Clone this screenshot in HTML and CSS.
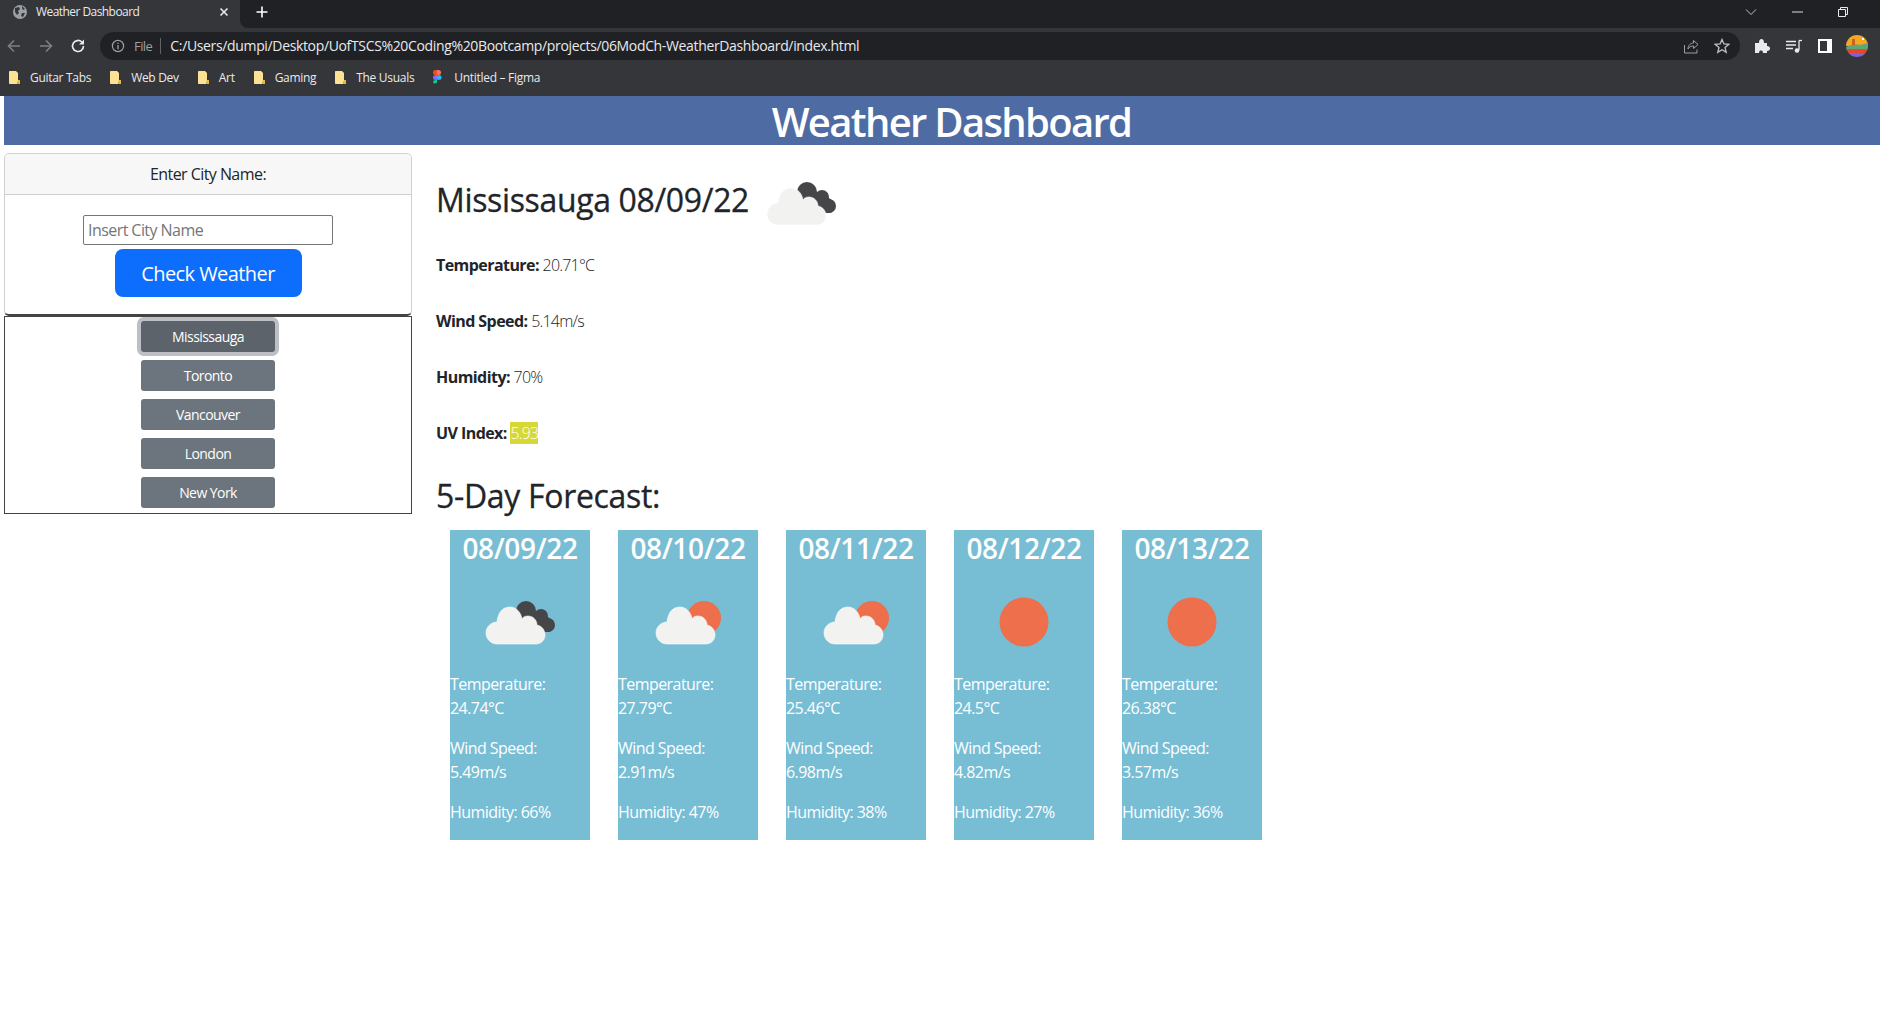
FILE: index.html
```html
<!DOCTYPE html>
<html lang="en">
<head>
    <meta charset="UTF-8">
    <title>Weather Dashboard</title>
    <link rel="stylesheet" href="styles.css">
</head>
<body>
<svg class="defs" width="0" height="0">
    <defs>
        <path id="cloud-shape" d="M27 72 H66 C71 72 75 68 75 63 C75 58 72 54 67 53 C67 48 63 44 58 44 C55 44 53 45 52 47 C51 40 46 35 40 35 C33 35 28 40 27 50 C21 50 16 55 16 61 C16 67 21 72 27 72 Z"/>
        <g id="icon-dark">
            <circle cx="56" cy="39" r="10" fill="#464548"/>
            <circle cx="71" cy="44" r="7" fill="#464548"/>
            <circle cx="78" cy="53" r="7" fill="#464548"/>
            <path fill="#464548" d="M50 40 L72 40 L84 50 L80 60 L68 60 Z"/>
            <use href="#cloud-shape" fill="#f2f2f0" stroke="#fff" stroke-width="0.6"/>
        </g>
        <g id="icon-sun-cloud">
            <circle cx="66" cy="46" r="17" fill="#ee6f4c"/>
            <use href="#cloud-shape" x="2" fill="#f2f2f0" stroke="#fff" stroke-width="0.6"/>
        </g>
        <g id="icon-sun">
            <circle cx="50" cy="50" r="24.5" fill="#ee6f4c"/>
        </g>
        <g id="folder">
            <path fill="#fde293" d="M1 2 C1 1.4 1.4 1 2 1 H8 L10 3 V11 L9 14 H2 C1.4 14 1 13.6 1 13 Z"/>
            <path fill="#e8b93c" d="M10 10 L12 10 V14 H9 Z"/>
        </g>
    </defs>
</svg>

<div class="tabstrip">
    <div class="tab">
        <svg class="favicon" width="16" height="16" viewBox="0 0 16 16"><circle cx="8" cy="8" r="7" fill="#9aa0a6"/><path fill="#35363a" d="M3 4 L7 3 L8 5 L6 7 L7 9 L5 11 L3 8 Z M10 2 L13 5 L11 6 L10 4 Z M10 9 L13 9 L11 13 L9 12 Z"/></svg>
        <span class="tab-title">Weather Dashboard</span>
        <svg class="tab-close" width="10" height="10" viewBox="0 0 10 10"><path d="M1.5 1.5 L8.5 8.5 M8.5 1.5 L1.5 8.5" stroke="#e8eaed" stroke-width="1.6"/></svg>
    </div>
    <div class="strip-rest">
        <svg class="new-tab" width="12" height="12" viewBox="0 0 12 12"><path d="M6 0.5 V11.5 M0.5 6 H11.5" stroke="#fff" stroke-width="1.6"/></svg>
        <div class="win-btns">
            <svg width="12" height="8" viewBox="0 0 12 8"><path d="M1 1.5 L6 6.5 L11 1.5" fill="none" stroke="#bdc1c6" stroke-width="1"/></svg>
            <svg width="11" height="2" viewBox="0 0 11 2"><path d="M0 1 H11" stroke="#dadce0" stroke-width="1"/></svg>
            <svg width="10" height="10" viewBox="0 0 10 10"><path d="M0.5 2.5 H7.5 V9.5 H0.5 Z M2.5 2.5 V0.5 H9.5 V7.5 H7.5" fill="none" stroke="#e8eaed" stroke-width="1"/></svg>
        </div>
    </div>
</div>

<div class="toolbar">
    <svg class="nav" width="16" height="16" viewBox="0 0 16 16"><path d="M14 8 H2.5 M8 2.5 L2.5 8 L8 13.5" fill="none" stroke="#7d8084" stroke-width="1.6"/></svg>
    <svg class="nav" width="16" height="16" viewBox="0 0 16 16"><path d="M2 8 H13.5 M8 2.5 L13.5 8 L8 13.5" fill="none" stroke="#7d8084" stroke-width="1.6"/></svg>
    <svg class="nav" width="16" height="16" viewBox="0 0 16 16"><path d="M13.5 8 A5.5 5.5 0 1 1 11.8 4" fill="none" stroke="#e8eaed" stroke-width="1.7"/><path fill="#e8eaed" d="M14 1.5 V6.5 H9 Z"/></svg>
    <div class="omnibox">
        <svg width="14" height="14" viewBox="0 0 14 14"><circle cx="7" cy="7" r="5.6" fill="none" stroke="#9aa0a6" stroke-width="1.2"/><path d="M7 6 V10.2 M7 3.8 V5" stroke="#9aa0a6" stroke-width="1.3"/></svg>
        <span class="scheme">File</span>
        <span class="url">C:/Users/dumpi/Desktop/UofTSCS%20Coding%20Bootcamp/projects/06ModCh-WeatherDashboard/index.html</span>
        <svg class="omni-end" width="16" height="16" viewBox="0 0 16 16"><path d="M1.5 7 V15 H14 V11.5 M5 11 C5 7 8 5 10.5 5 V2.5 L15 6.5 L10.5 10.5 V8 C8 8 6 9 5 11 Z" fill="none" stroke="#9aa0a6" stroke-width="1"/></svg>
        <svg width="16" height="16" viewBox="0 0 16 16"><path d="M8 1.5 L9.9 6 L14.7 6.4 L11 9.5 L12.2 14.3 L8 11.7 L3.8 14.3 L5 9.5 L1.3 6.4 L6.1 6 Z" fill="none" stroke="#bdc1c6" stroke-width="1.3"/></svg>
    </div>
    <div class="tool-icons">
        <svg width="16" height="16" viewBox="0 0 16 16"><path fill="#e8eaed" d="M1 5 H5 C5 2 6 1 7.5 1 C9 1 10 2 10 5 H13 V8 C15 8 16 9 16 10.5 C16 12 15 13 13 13 V15 H9 C9 13 8 12.5 7 12.5 C6 12.5 5 13 5 15 H1 Z"/></svg>
        <svg width="16" height="16" viewBox="0 0 16 16"><path d="M0 3.5 H10 M0 7 H10 M0 10.5 H7" stroke="#e8eaed" stroke-width="1.3"/><path d="M13 2.5 V12" stroke="#e8eaed" stroke-width="1.3"/><circle cx="11" cy="12.5" r="2.3" fill="#e8eaed"/><path d="M13 2.5 H16" stroke="#e8eaed" stroke-width="1.3"/></svg>
        <svg width="14" height="14" viewBox="0 0 14 14"><path fill="#fff" fill-rule="evenodd" d="M0 0 H14 V14 H0 Z M2 2 V12 H9 V2 Z"/></svg>
        <svg class="avatar" width="22" height="22" viewBox="0 0 22 22">
            <clipPath id="avatar-clip"><circle cx="11" cy="11" r="11"/></clipPath>
            <g clip-path="url(#avatar-clip)">
                <rect width="22" height="11" fill="#f5a623"/>
                <path d="M0 12 L8 9 L14 10 L22 8 V15 H0 Z" fill="#5fa777"/>
                <rect y="14" width="22" height="4" fill="#e8452c"/>
                <rect y="18" width="22" height="4" fill="#7b63d6"/>
                <rect x="6" y="4" width="3" height="6" fill="#c9651f"/>
                <rect x="16" y="3" width="2" height="2" fill="#fff"/>
            </g>
        </svg>
    </div>
</div>

<div class="bookmarks">
    <span class="bookmark"><svg width="12" height="15" viewBox="0 0 12 15"><use href="#folder"/></svg>Guitar Tabs</span>
    <span class="bookmark"><svg width="12" height="15" viewBox="0 0 12 15"><use href="#folder"/></svg>Web Dev</span>
    <span class="bookmark"><svg width="12" height="15" viewBox="0 0 12 15"><use href="#folder"/></svg>Art</span>
    <span class="bookmark"><svg width="12" height="15" viewBox="0 0 12 15"><use href="#folder"/></svg>Gaming</span>
    <span class="bookmark"><svg width="12" height="15" viewBox="0 0 12 15"><use href="#folder"/></svg>The Usuals</span>
    <span class="bookmark"><svg width="12" height="15" viewBox="0 0 12 15"><path fill="#f24e1e" d="M1 2.5 A2.5 2.5 0 0 1 3.5 0 H5 V5 H3.5 A2.5 2.5 0 0 1 1 2.5 Z"/><path fill="#ff7262" d="M5 0 H6.5 A2.5 2.5 0 0 1 6.5 5 H5 Z"/><path fill="#a259ff" d="M1 7.5 A2.5 2.5 0 0 1 3.5 5 H5 V10 H3.5 A2.5 2.5 0 0 1 1 7.5 Z"/><circle cx="7" cy="7.5" r="2.5" fill="#1abcfe"/><path fill="#0acf83" d="M1 12.5 A2.5 2.5 0 0 1 3.5 10 H5 V12.5 A2.5 2.5 0 0 1 1 12.5 Z"/></svg>Untitled – Figma</span>
</div>

<div class="page">
    <header class="page-title">Weather Dashboard</header>
    <div class="layout">
        <aside class="side">
            <div class="card">
                <div class="card-header">Enter City Name:</div>
                <div class="card-body">
                    <input class="city-input" type="text" placeholder="Insert City Name">
                    <button class="btn-check">Check Weather</button>
                </div>
            </div>
            <div class="history">
                <button class="btn-city focus">Mississauga</button>
                <button class="btn-city">Toronto</button>
                <button class="btn-city">Vancouver</button>
                <button class="btn-city">London</button>
                <button class="btn-city">New York</button>
            </div>
        </aside>
        <main class="main">
            <h2 class="today-title">Mississauga 08/09/22 <svg class="icon" width="100" height="100" viewBox="0 0 100 100"><use href="#icon-dark"/></svg></h2>
            <p class="stat"><b>Temperature:</b> <span>20.71°C</span></p>
            <p class="stat"><b>Wind Speed:</b> <span>5.14m/s</span></p>
            <p class="stat"><b>Humidity:</b> <span>70%</span></p>
            <p class="stat"><b>UV Index:</b> <span class="uv">5.93</span></p>
            <h2 class="forecast-title">5-Day Forecast:</h2>
            <div class="forecast">
                <div class="day">
                    <h3>08/09/22</h3>
                    <svg class="icon" width="100" height="100" viewBox="0 0 100 100"><use href="#icon-dark"/></svg>
                    <p>Temperature: 24.74°C</p>
                    <p>Wind Speed: 5.49m/s</p>
                    <p>Humidity: 66%</p>
                </div>
                <div class="day">
                    <h3>08/10/22</h3>
                    <svg class="icon" width="100" height="100" viewBox="0 0 100 100"><use href="#icon-sun-cloud"/></svg>
                    <p>Temperature: 27.79°C</p>
                    <p>Wind Speed: 2.91m/s</p>
                    <p>Humidity: 47%</p>
                </div>
                <div class="day">
                    <h3>08/11/22</h3>
                    <svg class="icon" width="100" height="100" viewBox="0 0 100 100"><use href="#icon-sun-cloud"/></svg>
                    <p>Temperature: 25.46°C</p>
                    <p>Wind Speed: 6.98m/s</p>
                    <p>Humidity: 38%</p>
                </div>
                <div class="day">
                    <h3>08/12/22</h3>
                    <svg class="icon" width="100" height="100" viewBox="0 0 100 100"><use href="#icon-sun"/></svg>
                    <p>Temperature: 24.5°C</p>
                    <p>Wind Speed: 4.82m/s</p>
                    <p>Humidity: 27%</p>
                </div>
                <div class="day">
                    <h3>08/13/22</h3>
                    <svg class="icon" width="100" height="100" viewBox="0 0 100 100"><use href="#icon-sun"/></svg>
                    <p>Temperature: 26.38°C</p>
                    <p>Wind Speed: 3.57m/s</p>
                    <p>Humidity: 36%</p>
                </div>
            </div>
        </main>
    </div>
</div>
</body>
</html>
```

FILE: styles.css
```css
* {
    box-sizing: border-box;
}

html, body {
    margin: 0;
    padding: 0;
    overflow: hidden;
}

body {
    height: 1017px;
    background: #fff;
    color: #212529;
    font-family: "Open Sans", "Noto Sans", sans-serif;
    font-size: 16px;
    line-height: 24px;
    letter-spacing: -0.035em;
}

.defs {
    position: absolute;
}

/* browser chrome */
.tabstrip {
    height: 28px;
    background: #35363a;
    display: flex;
}

.tab {
    width: 240px;
    padding: 0 11px 5px 12px;
    display: flex;
    align-items: center;
}

.tab-title {
    margin-left: 8px;
    flex: 1;
    color: #e8eaed;
    font-size: 12px;
}

.strip-rest {
    flex: 1;
    padding: 0 32px 5px 16px;
    background: #202124;
    border-bottom-left-radius: 8px;
    display: flex;
    align-items: center;
}

.win-btns {
    margin-left: auto;
    display: flex;
    align-items: center;
    gap: 35px;
}

.toolbar {
    height: 37px;
    padding: 4px 0 5px 6px;
    background: #35363a;
    display: flex;
    align-items: center;
    gap: 16px;
}

.omnibox {
    width: 1640px;
    height: 28px;
    margin-left: -2px;
    padding: 0 10px 0 11px;
    background: #202124;
    border-radius: 14px;
    display: flex;
    align-items: center;
    color: #e8eaed;
    font-size: 14px;
}

.scheme {
    margin-left: 9px;
    padding-right: 8px;
    margin-right: 9px;
    border-right: 1px solid #5f6368;
    line-height: 16px;
    color: #9aa0a6;
    font-size: 13px;
}

.url {
    flex: 1;
    letter-spacing: -0.025em;
}

.omni-end {
    margin-right: 15px;
}

.tool-icons {
    margin-left: -2px;
    display: flex;
    align-items: center;
    gap: 16px;
}

.avatar {
    margin-left: -2px;
}

.bookmarks {
    height: 31px;
    padding: 0 0 6px 8px;
    background: #35363a;
    display: flex;
    align-items: center;
    gap: 18px;
    color: #e8eaed;
    font-size: 12px;
    letter-spacing: -0.025em;
}

.bookmark {
    display: flex;
    align-items: center;
    gap: 10px;
}

/* page */
.page {
    padding-left: 4px;
}

.page-title {
    height: 49px;
    padding-left: 19px;
    background: #4f6ba3;
    color: #fff;
    font-size: 40px;
    font-weight: 600;
    letter-spacing: -0.042em;
    line-height: 51px;
    text-align: center;
}

.layout {
    display: flex;
    gap: 24px;
    padding-top: 8px;
}

.side {
    width: 408px;
    flex: none;
}

.card {
    height: 163px;
    border: 1px solid #d0d0d0;
    border-radius: 5px;
    border-bottom: 2px solid #444;
}

.card-header {
    height: 41px;
    background: #f7f7f7;
    border-bottom: 1px solid #d0d0d0;
    border-radius: 4px 4px 0 0;
    text-align: center;
    line-height: 41px;
}

.card-body {
    padding-top: 20px;
    display: flex;
    flex-direction: column;
    align-items: center;
    gap: 4px;
}

.city-input {
    width: 250px;
    height: 30px;
    padding: 0 4px;
    border: 1px solid #767676;
    border-radius: 2px;
    font: inherit;
    letter-spacing: inherit;
}

.city-input::placeholder {
    color: #757575;
}

.btn-check {
    width: 187px;
    height: 48px;
    border: 0;
    border-radius: 8px;
    background: #0d6efd;
    color: #fff;
    font-family: inherit;
    font-size: 20px;
    letter-spacing: inherit;
}

.history {
    height: 198px;
    padding-top: 4px;
    border: 1px solid #444;
    display: flex;
    flex-direction: column;
    align-items: center;
    gap: 8px;
}

.btn-city {
    width: 134px;
    height: 31px;
    border: 0;
    border-radius: 3px;
    background: #6c757d;
    color: #fff;
    font-family: inherit;
    font-size: 14px;
    letter-spacing: inherit;
}

.btn-city.focus {
    background: #5c636a;
    box-shadow: 0 0 0 4px #bcbfc3;
}

.main {
    flex: 1;
}

.today-title {
    margin: 0;
    height: 100px;
    font-size: 32px;
    font-weight: 500;
    letter-spacing: -0.011em;
    -webkit-text-stroke: 0.3px #212529;
    line-height: 38px;
    white-space: nowrap;
}

.icon {
    display: inline-block;
    vertical-align: middle;
}

.today-title .icon {
    margin-left: -6px;
}

.stat {
    margin: 0 0 32px;
}

.stat b {
    font-weight: 700;
}

.stat span {
    font-weight: 300;
    letter-spacing: -0.05em;
}

.stat .uv {
    background: #d5d836;
    color: #fff;
}

.forecast-title {
    margin: 1px 0 15px;
    font-size: 32px;
    font-weight: 500;
    letter-spacing: -0.01em;
    -webkit-text-stroke: 0.3px #212529;
    line-height: 38px;
}

.forecast {
    display: flex;
    gap: 28px;
    padding-left: 14px;
}

.day {
    width: 140px;
    height: 310px;
    background: #77bdd4;
    color: #fff;
}

.day h3 {
    margin: 0 0 6px;
    font-size: 28px;
    font-weight: 600;
    letter-spacing: -0.012em;
    line-height: 36px;
    text-align: center;
}

.day .icon {
    display: block;
    margin: 0 auto;
}

.day p {
    margin: 0 0 16px;
}
```
